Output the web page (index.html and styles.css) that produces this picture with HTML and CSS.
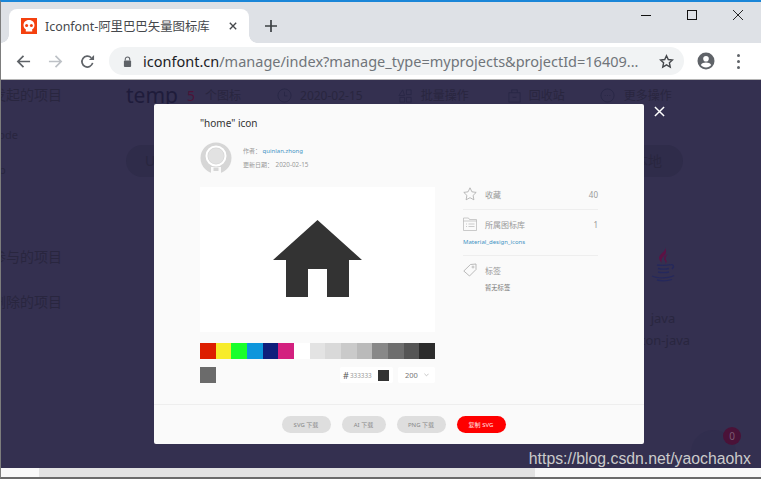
FILE: index.html
```html
<!DOCTYPE html>
<html lang="zh">
<head>
    <meta charset="UTF-8">
    <title>Iconfont-阿里巴巴矢量图标库</title>
    <link rel="stylesheet" href="styles.css">
</head>
<body>
<div class="window">
    <div class="tabstrip">
        <div class="tab">
            <svg class="favicon" viewBox="0 0 16 16"><rect width="16" height="16" fill="#f4410f"/><path d="M8 2c-3.400 0-5.500 2.300-5.500 5.200 0 1.900 1 3.300 2.300 4.100V13.500h6.400v-2.200c1.300-.8 2.300-2.200 2.300-4.100C13.500 4.300 11.400 2 8 2z" fill="#fff"/><circle cx="5.600" cy="7.400" r="1.500" fill="#f4410f"/><circle cx="10.400" cy="7.400" r="1.500" fill="#f4410f"/></svg>
            <span class="tab-title">Iconfont-阿里巴巴矢量图标库</span>
            <svg class="tab-close" viewBox="0 0 10 10"><path d="M1 1l8 8M9 1l-8 8" stroke="#45484c" stroke-width="1.700"/></svg>
        </div>
        <svg class="new-tab" viewBox="0 0 12 12"><path d="M6 0v12M0 6h12" stroke="#3c4043" stroke-width="1.700"/></svg>
        <div class="win-controls">
            <svg viewBox="0 0 10 10"><path d="M0 5.500h10" stroke="#111" stroke-width="1"/></svg>
            <svg viewBox="0 0 10 10"><rect x=".5" y=".5" width="9" height="9" fill="none" stroke="#111" stroke-width="1"/></svg>
            <svg viewBox="0 0 10 10"><path d="M0 0l10 10M10 0L0 10" stroke="#111" stroke-width=".9"/></svg>
        </div>
    </div>
    <div class="toolbar">
        <svg class="nav-btn" viewBox="0 0 16 16"><path d="M15 8H2M8 2L2 8l6 6" fill="none" stroke="#5f6368" stroke-width="1.800"/></svg>
        <svg class="nav-btn" viewBox="0 0 16 16"><path d="M1 8h13M8 2l6 6-6 6" fill="none" stroke="#bdc1c6" stroke-width="1.800"/></svg>
        <svg class="nav-btn" viewBox="0 0 16 16"><path d="M13.500 9.500A5.800 5.800 0 1 1 12 4" fill="none" stroke="#5f6368" stroke-width="1.800"/><path d="M9.500 6.500H15V1z" fill="#5f6368"/></svg>
        <div class="omnibox">
            <svg class="lock" viewBox="0 0 10 12"><path d="M2.500 5V3.500a2.500 2.500 0 0 1 5 0V5" fill="none" stroke="#5f6368" stroke-width="1.200"/><rect x="1" y="5" width="8" height="7" rx="1" fill="#5f6368"/></svg>
            <div class="url"><span class="url-host">iconfont.cn</span>/manage/index?manage_type=myprojects&amp;projectId=16409...</div>
            <svg class="star-btn" viewBox="0 0 16 16"><path d="M8 1.800l1.900 4.100 4.500.5-3.300 3 .9 4.500L8 11.600l-4 2.300.9-4.500-3.300-3 4.500-.5z" fill="none" stroke="#45484c" stroke-width="1.500"/></svg>
        </div>
        <svg class="profile" viewBox="0 0 18 18"><circle cx="9" cy="9" r="8.500" fill="#5f6368"/><circle cx="9" cy="6.800" r="2.800" fill="#fff"/><path d="M3.800 13c1-1.800 3-2.500 5.200-2.500s4.200.7 5.200 2.500c-1.200 1.500-3.100 2.400-5.200 2.400S5 14.500 3.800 13z" fill="#fff"/></svg>
        <div class="dots"><i></i><i></i><i></i></div>
    </div>

    <div class="page">
        <aside class="sidebar">
            <div class="side-group">我发起的项目</div>
            <div class="side-item side-code">code</div>
            <div class="side-item side-app">app</div>
            <div class="side-group side-joined">我参与的项目</div>
            <div class="side-group side-deleted">已删除的项目</div>
        </aside>
        <main class="main">
            <div class="head-row">
                <span class="project-name">temp</span>
                <span class="icon-count">5</span>
                <span class="head-text">个图标</span>
                <svg class="head-icon head-clock" viewBox="0 0 16 16"><circle cx="8" cy="8" r="7" fill="none" stroke="#2a2746"/><path d="M8 4v4.500h3" fill="none" stroke="#2a2746"/></svg>
                <span class="head-text">2020-02-15</span>
                <svg class="head-icon head-batch" viewBox="0 0 16 16"><path d="M1 8l4-6 2 6zM9 2h5v5H9zM2 10h5v5H2zM9 10h5v5H9z" fill="none" stroke="#2a2746"/></svg>
                <span class="head-text">批量操作</span>
                <svg class="head-icon head-bin" viewBox="0 0 16 16"><path d="M2 5h12v10H2zM5 5V2h6v3M6 10h4" fill="none" stroke="#2a2746"/></svg>
                <span class="head-text">回收站</span>
                <svg class="head-icon head-more" viewBox="0 0 16 16"><circle cx="8" cy="8" r="7" fill="none" stroke="#2a2746"/><path d="M5 8h1M7.500 8h1M10 8h1" stroke="#2a2746"/></svg>
                <span class="head-text">更多操作</span>
            </div>
            <div class="pill-row">
                <div class="bg-pill">Upload</div>
                <div class="bg-pill bg-pill-right">下载至本地</div>
            </div>
            <div class="bg-icon">
                <svg class="java-icon" viewBox="0 0 26 36"><path d="M15 0c2 4-6 7-6 11 0 2 2 4 3 5-1-2-1-4 2-7 2-2 3-5 1-9zM18 7c-4 2-5 4-3 7 1 1 1 2 0 3 2-1 2-3 1-4-1-2 0-4 2-6z" fill="#5c1244"/><path d="M7 18c3 .6 10 .6 13-.3M8 21.500c3 .6 8 .6 11 0M8 25c3 .6 8 .6 11 0M2 29c5 2.500 17 2.500 22-.5M7 33c4 1 10 1 15-.5M20 18c3-1 5 1 2 4" fill="none" stroke="#25285c" stroke-width="1.300"/></svg>
                <div class="bg-icon-name">java</div>
                <div class="bg-icon-code">icon-java</div>
            </div>
        </main>

        <div class="cart-bubble"></div>
        <div class="cart-badge">0</div>

        <div class="modal">
            <div class="modal-body">
                <div class="modal-title">"home" icon</div>
                <div class="author">
                    <svg class="avatar" viewBox="0 0 32 32"><circle cx="16" cy="16" r="15.500" fill="#d6d6d6"/><circle cx="16" cy="14" r="9.500" fill="none" stroke="#fff" stroke-width="2"/><circle cx="16" cy="14" r="7.800" fill="#e2e2e2"/><rect x="11" y="25" width="10" height="7" fill="#fafafa"/><rect x="13.500" y="25.500" width="5" height="3.500" fill="#d6d6d6"/></svg>
                    <div class="author-info">
                        <div>作者： <a class="link">quinlan.zhong</a></div>
                        <div>更新日期： <span class="author-date">2020-02-15</span></div>
                    </div>
                </div>
                <div class="detail">
                    <div class="detail-left">
                        <div class="preview">
                            <svg class="house" viewBox="0 0 89 77"><path d="M44.500 0L89 40H76V77H54V49H35V77H13V40H0z" fill="#333"/></svg>
                        </div>
                        <div class="swatches">
                            <i class="sw-red"></i><i class="sw-yellow"></i><i class="sw-green"></i><i class="sw-blue"></i><i class="sw-navy"></i><i class="sw-pink"></i><i class="sw-white"></i><i class="sw-g1"></i><i class="sw-g2"></i><i class="sw-g3"></i><i class="sw-g4"></i><i class="sw-g5"></i><i class="sw-g6"></i><i class="sw-g7"></i><i class="sw-g8"></i>
                        </div>
                        <div class="color-row">
                            <div class="current-color"></div>
                            <div class="hex-box"><span class="hash">#</span><span class="hex">333333</span><i class="hex-chip"></i></div>
                            <div class="size-box"><span>200</span><svg class="caret" viewBox="0 0 6 4"><path d="M.5.500L3 3 5.500.5" fill="none" stroke="#aaa" stroke-width=".8"/></svg></div>
                        </div>
                    </div>
                    <div class="detail-right">
                        <div class="info-row">
                            <svg class="info-icon" viewBox="0 0 14 14"><path d="M7 .8l1.900 4 4.300.6-3.100 3 .8 4.400L7 10.700l-3.900 2.100.8-4.400-3.100-3 4.300-.6z" fill="none" stroke="#aaa" stroke-width=".8"/></svg>
                            <span class="info-label">收藏</span>
                            <span class="info-num">40</span>
                        </div>
                        <div class="info-line"></div>
                        <div class="info-row">
                            <svg class="info-icon" viewBox="0 0 14 14"><path d="M.5 1h5l1 1.500h7v11H.5zM.5 4h13M3 7h1M5.500 7h6M3 9.500h1M5.500 9.500h6" fill="none" stroke="#b5b5b5" stroke-width=".7"/></svg>
                            <span class="info-label">所属图标库</span>
                            <span class="info-num">1</span>
                        </div>
                        <a class="lib-link">Material_design_icons</a>
                        <div class="info-line"></div>
                        <div class="info-row">
                            <svg class="info-icon" viewBox="0 0 14 14"><path d="M.8 8L7.500 1.500l5.500-.5v5.500L6.500 13z" fill="none" stroke="#aaa" stroke-width=".8"/><circle cx="10" cy="4" r="1" fill="none" stroke="#aaa" stroke-width=".7"/></svg>
                            <span class="info-label">标签</span>
                        </div>
                        <div class="no-tags">暂无标签</div>
                    </div>
                </div>
            </div>
            <div class="modal-foot">
                <button class="btn btn-svg">SVG 下载</button>
                <button class="btn btn-ai">AI 下载</button>
                <button class="btn btn-svg">PNG 下载</button>
                <button class="btn btn-copy">复制 SVG</button>
            </div>
        </div>
        <svg class="modal-close" viewBox="0 0 12 12"><path d="M1 1l10 10M11 1L1 11" stroke="#fff" stroke-width="1.600"/></svg>
        <div class="watermark">https://blog.csdn.net/yaochaohx</div>
    </div>
    <div class="hscroll"><div class="hscroll-thumb"></div></div>
</div>
</body>
</html>
```

FILE: styles.css
```css
* {
    box-sizing: border-box;
}
html, body {
    margin: 0;
    height: 100%;
    overflow: hidden;
}
body {
    font-family: "Noto Sans", "Noto Sans CJK SC", sans-serif;
    background: #5a5a5a;
}
.window {
    width: 761px;
    height: 479px;
    display: flex;
    flex-direction: column;
    border-top: 2px solid #1a86d8;
    border-left: 1px solid #7d7d7d;
    border-bottom: 2px solid #6a6a6a;
}

/* browser chrome */
.tabstrip {
    height: 41px;
    flex: none;
    background: #dee1e6;
    display: flex;
    align-items: flex-end;
    padding-left: 8px;
}
.tab {
    width: 240px;
    height: 34px;
    flex: none;
    position: relative;
    background: #fff;
    border-radius: 8px 8px 0 0;
    display: flex;
    align-items: center;
    padding-left: 12px;
}
.tab::before, .tab::after {
    content: "";
    position: absolute;
    bottom: 0;
    width: 8px;
    height: 8px;
}
.tab::before {
    left: -8px;
    background: radial-gradient(circle at 0 0, #dee1e6 7.500px, #fff 8px);
}
.tab::after {
    right: -8px;
    background: radial-gradient(circle at 100% 0, #dee1e6 7.500px, #fff 8px);
}
.favicon {
    width: 16px;
    height: 16px;
    flex: none;
}
.tab-title {
    margin-left: 8px;
    font-size: 12.400px;
    color: #45484c;
    white-space: nowrap;
}
.tab-close {
    width: 8px;
    height: 8px;
    margin: 0 12px 0 auto;
    flex: none;
}
.new-tab {
    width: 12px;
    height: 12px;
    margin: 0 0 11px 16px;
    flex: none;
}
.win-controls {
    margin-left: auto;
    align-self: flex-start;
    display: flex;
    gap: 36px;
    padding: 8px 18px 0 0;
}
.win-controls svg {
    width: 10px;
    height: 10px;
}
.toolbar {
    height: 37px;
    flex: none;
    background: #fff;
    border-bottom: 1px solid #b5b5b5;
    display: flex;
    align-items: center;
    padding-left: 15px;
}
.nav-btn {
    width: 15px;
    height: 15px;
    margin-right: 17px;
    flex: none;
}
.omnibox {
    width: 575px;
    height: 28px;
    margin-left: -3px;
    background: #f1f3f4;
    border-radius: 14px;
    display: flex;
    align-items: center;
    padding-left: 14px;
}
.lock {
    width: 9px;
    height: 11px;
    flex: none;
}
.url {
    margin-left: 11px;
    font-size: 14.500px;
    color: #70757a;
    white-space: nowrap;
    width: 500px;
}
.url-host {
    color: #202124;
}
.star-btn {
    width: 15px;
    height: 15px;
    margin-left: auto;
    margin-right: 10px;
}
.profile {
    width: 18px;
    height: 18px;
    margin-left: 13px;
    flex: none;
}
.dots {
    margin-left: 22px;
    display: flex;
    flex-direction: column;
    gap: 3px;
}
.dots i {
    width: 3px;
    height: 3px;
    border-radius: 50%;
    background: #5f6368;
}

/* page behind the dialog */
.page {
    flex: 1;
    position: relative;
    background: #343050;
    display: flex;
    overflow: hidden;
    color: #29263f;
}
.sidebar {
    width: 156px;
    flex: none;
    margin-left: -31px;
    padding-top: 5px;
    font-size: 14px;
    white-space: nowrap;
}
.side-group {
    height: 20px;
    line-height: 20px;
    text-align: right;
    padding-right: 64px;
}
.side-item {
    font-size: 11px;
    line-height: 16px;
    margin-top: 19px;
}
.side-code {
    margin-top: 22px;
    padding-left: 23px;
}
.side-app {
    padding-left: 16px;
}
.side-joined {
    margin-top: 69px;
}
.side-deleted {
    margin-top: 25px;
}
.main {
    flex: 1;
    padding-top: 2px;
}
.head-row {
    display: flex;
    align-items: center;
    height: 26px;
    font-size: 12px;
}
.project-name {
    font-size: 21px;
    width: 61px;
    color: #1f1c3b;
}
.icon-count {
    width: 18px;
    font-size: 14px;
    color: #4b1438;
}
.head-text {
    white-space: nowrap;
}
.head-icon {
    width: 15px;
    height: 15px;
    flex: none;
}
.head-clock {
    margin: 0 8px 0 36px;
}
.head-batch {
    margin: 0 8px 0 35px;
}
.head-bin {
    margin: 0 7px 0 38px;
}
.head-more {
    margin: 0 9px 0 35px;
}
.pill-row {
    display: flex;
    justify-content: space-between;
    margin-top: 37px;
    width: 557px;
}
.bg-pill {
    height: 32px;
    line-height: 32px;
    width: 110px;
    border-radius: 16px;
    background: #2f2c4a;
    padding-left: 19px;
    font-size: 14px;
}
.bg-pill-right {
    padding: 0 21px 0 0;
    text-align: right;
    white-space: nowrap;
}
.bg-icon {
    width: 100px;
    margin: 70px 0 0 487px;
    text-align: center;
    font-size: 13px;
    line-height: 22px;
}
.java-icon {
    width: 26px;
    height: 36px;
    display: block;
    margin: 0 auto 24px;
}
.cart-bubble {
    position: absolute;
    left: 690px;
    top: 350px;
    width: 45px;
    height: 45px;
    border-radius: 50%;
    background: #312e4e;
}
.cart-badge {
    position: absolute;
    left: 722px;
    top: 347px;
    width: 18px;
    height: 18px;
    border-radius: 50%;
    background: #4a1238;
    color: #7a5a72;
    font-size: 10px;
    line-height: 18px;
    text-align: center;
}

/* dialog */
.modal {
    position: absolute;
    left: 153px;
    top: 24px;
    width: 490px;
    height: 340px;
    background: #fafafa;
    border-radius: 2px;
    display: flex;
    flex-direction: column;
}
.modal-body {
    flex: 1;
    padding: 12px 46px 0;
}
.modal-title {
    font-size: 10px;
    line-height: 14px;
    color: #333;
}
.author {
    display: flex;
    align-items: center;
    gap: 11px;
    margin-top: 12px;
}
.avatar {
    width: 32px;
    height: 32px;
    flex: none;
}
.author-info {
    font-size: 6px;
    line-height: 14px;
    color: #999;
}
.author-date {
    margin-left: 1px;
    font-size: 6.300px;
}
.link, .lib-link {
    color: #3f93c4;
}
.detail {
    display: flex;
    margin-top: 13px;
}
.detail-left {
    width: 235px;
    flex: none;
}
.preview {
    height: 145px;
    background: #fff;
    display: flex;
    justify-content: center;
    padding-top: 33px;
}
.house {
    width: 89px;
    height: 77px;
}
.swatches {
    display: flex;
    height: 16px;
    margin-top: 11px;
}
.swatches i {
    flex: 1;
}
.sw-red { background: #dd1e00; }
.sw-yellow { background: #f7ec2b; }
.sw-green { background: #1aff2c; }
.sw-blue { background: #0d96dc; }
.sw-navy { background: #0f1f7c; }
.sw-pink { background: #d3207f; }
.sw-white { background: #fff; }
.sw-g1 { background: #e3e3e3; }
.sw-g2 { background: #d9d9d9; }
.sw-g3 { background: #cacaca; }
.sw-g4 { background: #bababa; }
.sw-g5 { background: #888; }
.sw-g6 { background: #6e6e6e; }
.sw-g7 { background: #555; }
.sw-g8 { background: #2c2c2c; }
.color-row {
    display: flex;
    align-items: center;
    margin-top: 8px;
    height: 16px;
}
.current-color {
    width: 16px;
    height: 16px;
    background: #6b6b6b;
}
.hex-box {
    margin-left: auto;
    width: 53px;
    height: 16px;
    background: #fff;
    border-radius: 2px;
    display: flex;
    align-items: center;
    padding-left: 3px;
    color: #777;
}
.hash {
    font-size: 9px;
    width: 7px;
    color: #555;
}
.hex {
    font-size: 6.300px;
    width: 28px;
    color: #999;
}
.hex-chip {
    width: 11px;
    height: 11px;
    background: #333;
    flex: none;
}
.size-box {
    width: 37px;
    height: 16px;
    margin-left: 5px;
    background: #fff;
    border-radius: 2px;
    display: flex;
    align-items: center;
    justify-content: space-between;
    padding: 0 6px 0 7px;
    font-size: 7.500px;
    color: #777;
}
.caret {
    width: 5px;
    height: 4px;
}
.detail-right {
    width: 135px;
    margin-left: 28px;
}
.info-row {
    display: flex;
    align-items: center;
    height: 14px;
    font-size: 8px;
    color: #999;
}
.info-icon {
    width: 14px;
    height: 14px;
    flex: none;
}
.info-label {
    margin-left: 8px;
}
.info-num {
    margin-left: auto;
}
.info-line {
    height: 1px;
    background: #eee;
    margin: 8px 0 7px;
}
.lib-link {
    display: block;
    margin-top: 6px;
    font-size: 6px;
    line-height: 10px;
}
.no-tags {
    margin: 6px 0 0 22px;
    font-size: 6.300px;
    line-height: 10px;
    color: #777;
}
.modal-foot {
    height: 40px;
    flex: none;
    border-top: 1px solid #eee;
    display: flex;
    align-items: center;
    justify-content: center;
    gap: 11px;
    padding-right: 11px;
}
.btn {
    height: 17px;
    width: 49px;
    padding: 0;
    border: none;
    border-radius: 9px;
    background: #dedede;
    color: #888;
    font-family: inherit;
    font-size: 6px;
}
.btn-ai {
    width: 44px;
}
.btn-copy {
    background: #ff0000;
    color: #ffe5e5;
}
.modal-close {
    position: absolute;
    left: 653px;
    top: 26px;
    width: 11px;
    height: 11px;
}
.watermark {
    position: absolute;
    right: 10px;
    bottom: 0;
    font-family: "Liberation Sans", sans-serif;
    font-size: 15.800px;
    line-height: 18px;
    color: #cbcbcb;
}
.hscroll {
    height: 9px;
    flex: none;
    background: #f8f8f8;
}
.hscroll-thumb {
    width: 496px;
    height: 100%;
    margin-left: 38px;
    background: #e2e2e2;
}
```
